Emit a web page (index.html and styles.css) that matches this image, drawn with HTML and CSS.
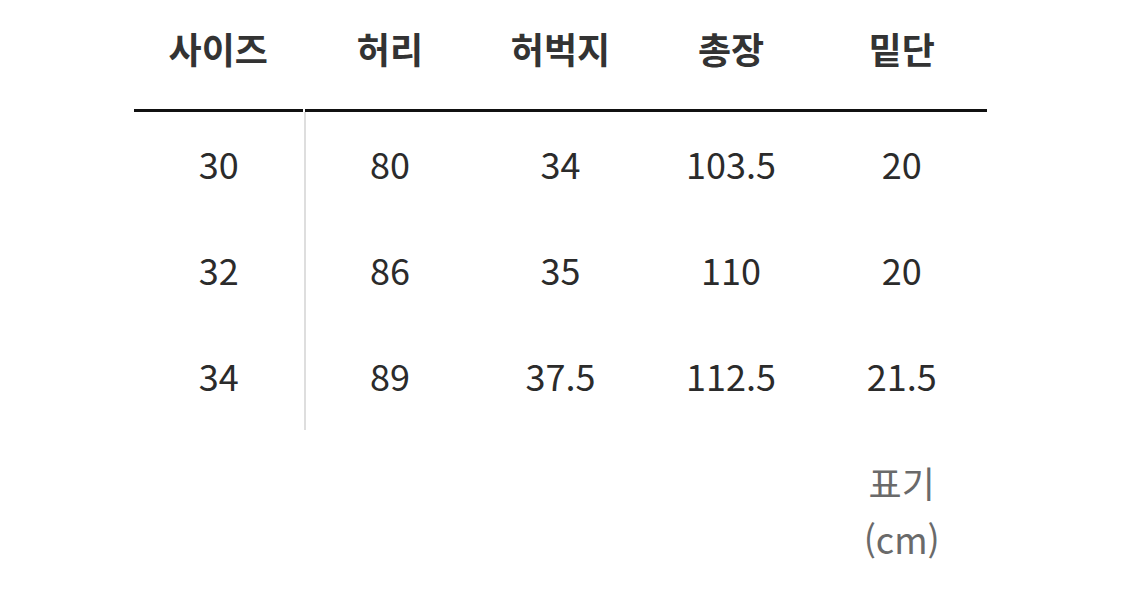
FILE: index.html
```html
<!DOCTYPE html>
<html lang="ko">
<head>
<meta charset="utf-8">
<link rel="stylesheet" href="styles.css">
</head>
<body>
<div class="size-table">
  <div class="head-row">
    <div class="cell head first">사이즈</div>
    <div class="cell head">허리</div>
    <div class="cell head">허벅지</div>
    <div class="cell head">총장</div>
    <div class="cell head">밑단</div>
  </div>
  <div class="body-row">
    <div class="cell first">30</div>
    <div class="cell">80</div>
    <div class="cell">34</div>
    <div class="cell">103.5</div>
    <div class="cell">20</div>
  </div>
  <div class="body-row">
    <div class="cell first">32</div>
    <div class="cell">86</div>
    <div class="cell">35</div>
    <div class="cell">110</div>
    <div class="cell">20</div>
  </div>
  <div class="body-row">
    <div class="cell first">34</div>
    <div class="cell">89</div>
    <div class="cell">37.5</div>
    <div class="cell">112.5</div>
    <div class="cell">21.5</div>
  </div>
  <div class="note-row">
    <div class="note"><span>표기</span><span>(cm)</span></div>
  </div>
</div>
</body>
</html>
```
FILE: styles.css
```css
html, body {
  margin: 0;
  padding: 0;
  background: #ffffff;
}
body {
  font-family: "Noto Sans CJK KR", "Noto Sans", sans-serif;
  color: #2a2a2a;
}
.size-table {
  margin-left: 134px;
  width: 853px;
}
.head-row, .body-row, .note-row {
  display: grid;
  grid-template-columns: repeat(5, 1fr);
}
.cell {
  display: flex;
  align-items: center;
  justify-content: center;
  font-size: 36px;
  line-height: 1;
}
.head {
  font-weight: 700;
  color: #333333;
  border-bottom: 3px solid #111111;
  padding-bottom: 14px;
  box-sizing: border-box;
  height: 112px;
}
.head.first {
  margin-right: 2px;
}
.body-row .cell {
  height: 106px;
  padding-bottom: 4px;
  box-sizing: border-box;
  font-weight: 400;
  color: #2b2b2b;
}
.body-row .cell.first {
  border-right: 2px solid #dedede;
  margin-right: -1px;
}
.note-row {
  padding-top: 24px;
}
.note {
  grid-column: 5;
  display: flex;
  flex-direction: column;
  align-items: center;
  font-size: 36px;
  line-height: 56px;
  color: #6a6a6a;
}
```
